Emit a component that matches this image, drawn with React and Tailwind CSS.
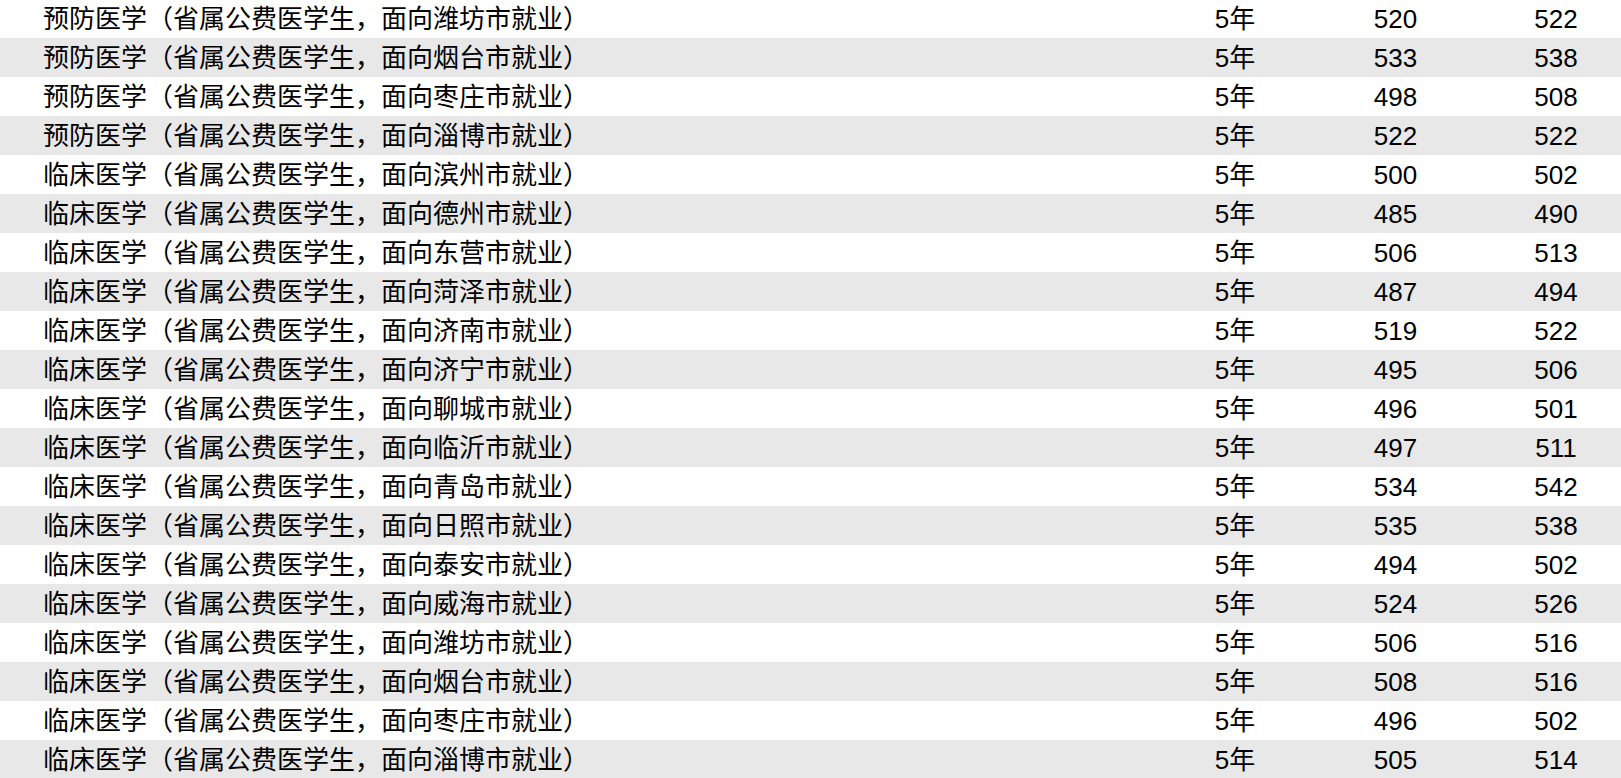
const rows = [
  ['预防医学', '潍坊', 520, 522],
  ['预防医学', '烟台', 533, 538],
  ['预防医学', '枣庄', 498, 508],
  ['预防医学', '淄博', 522, 522],
  ['临床医学', '滨州', 500, 502],
  ['临床医学', '德州', 485, 490],
  ['临床医学', '东营', 506, 513],
  ['临床医学', '菏泽', 487, 494],
  ['临床医学', '济南', 519, 522],
  ['临床医学', '济宁', 495, 506],
  ['临床医学', '聊城', 496, 501],
  ['临床医学', '临沂', 497, 511],
  ['临床医学', '青岛', 534, 542],
  ['临床医学', '日照', 535, 538],
  ['临床医学', '泰安', 494, 502],
  ['临床医学', '威海', 524, 526],
  ['临床医学', '潍坊', 506, 516],
  ['临床医学', '烟台', 508, 516],
  ['临床医学', '枣庄', 496, 502],
  ['临床医学', '淄博', 505, 514],
];

export default function App() {
  return (
    <div className="w-full h-[778px] overflow-hidden bg-white text-black font-['Liberation_Sans','Noto_Sans_CJK_SC',sans-serif] text-[26px]">
      <div className="-mt-px">
        {rows.map(([major, city, min, avg], i) => (
          <div
            key={i}
            className={`grid grid-cols-[1155px_160px_161px_160px] h-[39px] items-center leading-none ${
              i % 2 === 1 ? 'bg-[#e8e8e8]' : 'bg-white'
            }`}
          >
            <div className="pl-[43px] whitespace-nowrap">
              {major}（省属公费医学生，面向{city}市就业）
            </div>
            <div className="text-center">5年</div>
            <div className="text-center">{min}</div>
            <div className="text-center">{avg}</div>
          </div>
        ))}
      </div>
    </div>
  );
}
